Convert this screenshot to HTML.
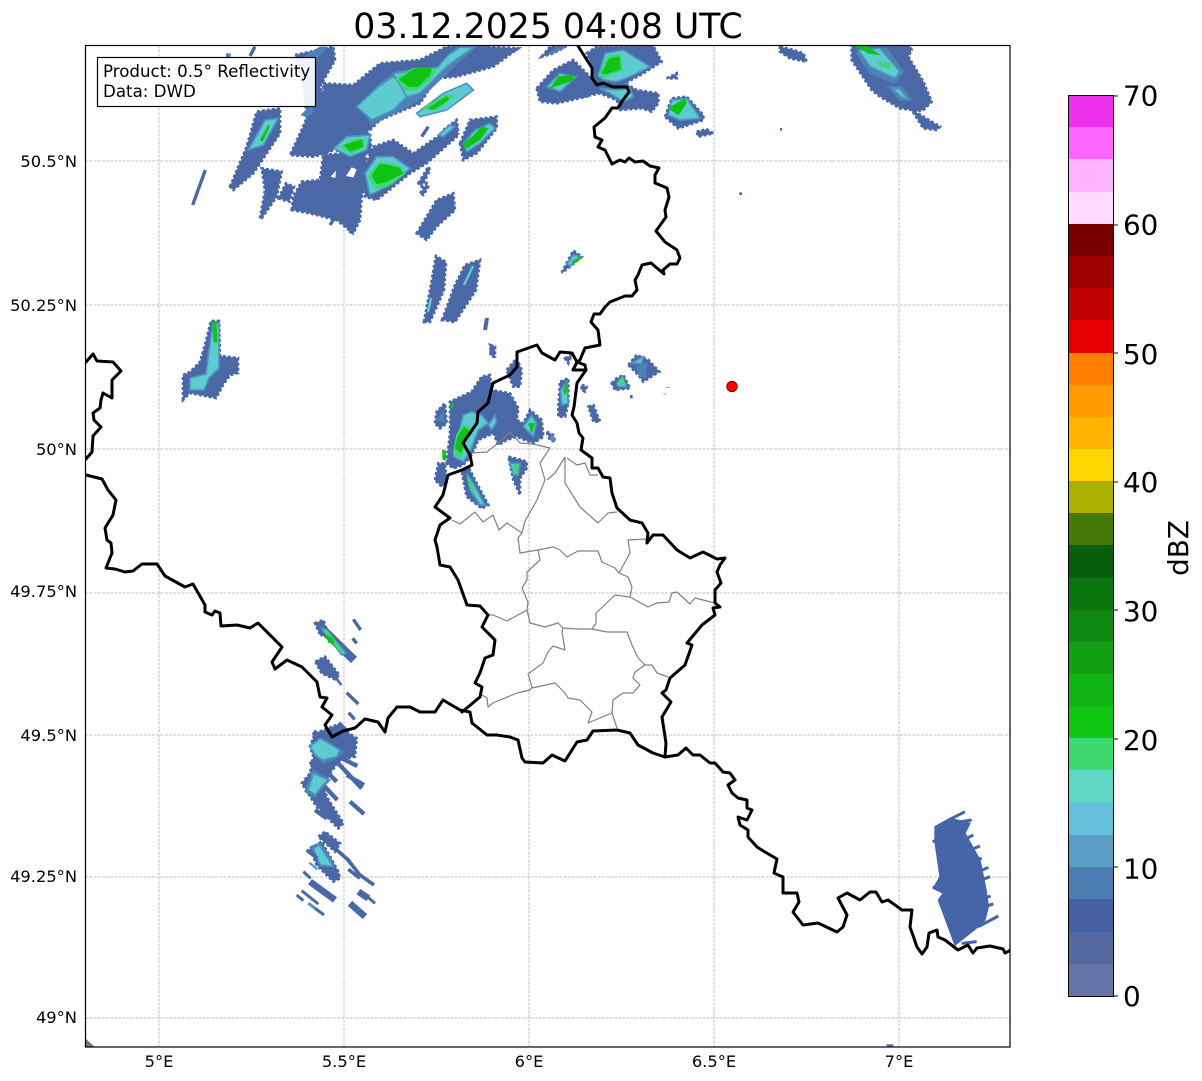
<!DOCTYPE html>
<html><head><meta charset="utf-8">
<style>
html,body{margin:0;padding:0;background:#fff;width:1202px;height:1081px;overflow:hidden}
svg{display:block}
text{font-family:"DejaVu Sans","Liberation Sans",sans-serif;fill:#000}
.g{stroke:#c2c2c2;stroke-width:.8;stroke-dasharray:3 1.2;fill:none;shape-rendering:crispEdges}
.bd{fill:none;stroke:#000;stroke-width:3;stroke-linejoin:round;stroke-linecap:round}
.ad{fill:none;stroke:#808080;stroke-width:1.2;stroke-linejoin:round}
.b{fill:#4b68a6;stroke:#4b68a6;stroke-width:8;stroke-dasharray:9 6}
.b1{fill:#4b68a6;stroke:#4b68a6;stroke-width:2.7;stroke-dasharray:3 2}
.m{fill:#4e82b6;stroke:#4e82b6;stroke-width:4}
.t{fill:#5ecbd0;stroke:#4f93c0;stroke-width:5}
.t1{fill:#5ecbd0;stroke:#4f93c0;stroke-width:1.6}
.l{fill:#3ed87a;stroke:#3ed87a;stroke-width:3}
.n{fill:#10c214;stroke:#10c214;stroke-width:1}
.s{stroke:#4b68a6;fill:none;stroke-linecap:butt}
.sm{stroke:#5ecbd0;fill:none}
.yl{font-size:16.3px;text-anchor:end}
.xl{font-size:16.3px;text-anchor:middle}
.cl{font-size:27.8px}
</style></head><body>
<svg width="1202" height="1081" viewBox="0 0 1202 1081" xmlns="http://www.w3.org/2000/svg">
<rect width="1202" height="1081" fill="#fff"/>
<text x="548" y="38" font-size="34.7" text-anchor="middle">03.12.2025 04:08 UTC</text>

<defs><clipPath id="ax"><rect x="85.5" y="45.5" width="924.5" height="1001"/></clipPath></defs>
<g clip-path="url(#ax)">
<!-- grid -->
<path class="g" d="M159 45V1047M344 45V1047M529 45V1047M714 45V1047M899 45V1047M85 161H1010M85 305H1010M85 449H1010M85 593H1010M85 735H1010M85 877H1010M85 1018H1010"/>

<polygon points="85,1038 95,1047 85,1047" fill="#777"/>

<!-- NW cluster -->
<g transform="translate(180,40) scale(.33333)">
<polygon class="b" points="430,130 520,135 600,70 720,60 800,20 890,18 1015,25 940,80 830,110 770,115 720,190 600,240 570,270 520,300 440,340 400,350 330,345 365,270 390,210 430,200"/>
<polygon class="b" points="345,45 460,20 465,60 420,140 440,200 380,230 370,130"/>
<polygon class="b" points="335,510 340,470 365,425 420,420 430,345 550,335 570,400 545,470 540,540 520,580 470,540 390,520"/>
<polygon fill="#fff" points="452,410 468,392 466,414"/>
<polygon fill="#fff" points="498,408 515,382 530,388 520,412"/>
<polygon class="b" points="550,390 580,320 640,300 700,340 830,250 830,290 740,370 690,400 640,440 590,480 555,470"/>
<polygon class="b" points="460,325 500,260 570,280 575,340 510,355"/>
<polygon class="b" points="840,310 870,240 950,230 950,265 890,340 850,360"/>
<polygon class="b" points="150,440 200,320 230,215 300,205 300,280 220,400 160,450"/>
<polygon class="b" points="240,535 255,450 245,385 305,395 290,470 245,535"/>
<polygon class="b" points="295,475 318,430 342,440 328,485"/>
<polygon class="b" points="710,580 770,480 820,460 825,510 770,560 740,600"/>
<polygon class="b" points="790,270 830,240 835,280 800,300"/>
<polygon class="b" points="715,430 745,380 750,390 725,440"/>
<polygon class="b" points="720,460 740,430 745,440 730,465"/>
<path class="s" stroke-width="10" d="M38 495L76 390M725 290L745 260M210 48L225 20M975 45L1015 25M450 555L470 525M510 580L530 540M340 345L370 300M880 40L930 20"/>
<rect x="138" y="40" width="14" height="12" fill="#4b88b8"/>
<polygon class="m" points="545,200 600,130 650,95 780,80 830,25 885,22 810,90 710,185 620,230 575,255"/>
<polygon class="t" points="530,200 595,140 640,110 700,150 640,210 575,240"/>
<polygon class="t" points="640,100 770,85 805,45 840,22 880,22 800,80 720,160 680,170"/>
<polygon class="l" points="650,115 700,85 770,85 750,120 710,150 675,150"/>
<polygon class="n" points="657,118 705,85 755,85 750,105 715,140 685,140"/>
<polygon class="t" points="710,220 790,160 860,130 880,150 800,210 720,230"/>
<polygon class="l" points="725,205 800,165 825,165 770,210"/>
<polygon class="n" points="745,205 800,168 808,178 760,210"/>
<polygon class="t" points="555,400 590,350 640,350 690,385 640,430 570,465"/>
<polygon class="l" points="565,410 600,365 660,380 675,400 620,440 585,445"/>
<polygon class="n" points="575,405 600,372 625,375 660,385 670,400 620,425 590,432"/>
<polygon class="t" points="462,325 500,290 570,285 560,330 510,350"/>
<polygon class="l" points="480,320 530,295 555,300 550,325 510,340"/>
<polygon class="n" points="492,315 545,298 550,320 510,335"/>
<polygon class="t" points="850,310 885,270 930,250 945,265 900,310 860,335"/>
<polygon class="n" points="848,312 880,287 905,260 925,265 900,300 860,325"/>
<polygon class="t" points="205,330 255,240 295,235 250,315"/>
<polygon class="n" points="240,300 265,255 270,260 247,305"/>
<polygon class="t" points="775,285 810,255 825,260 790,290"/>
<polygon class="m" points="358,60 420,22 440,22 380,90"/>
<polygon class="m" points="365,225 390,200 400,215 380,230"/>
</g>

<!-- middle small blobs -->
<polygon class="b1" points="424,322 430,290 436,256 446,262 444,290 430,322"/>
<polygon class="b1" points="442,320 455,285 465,265 480,260 476,290 455,322"/>
<path class="sm" stroke-width="2.5" d="M428 312L431 298M464 285L473 266"/>
<path class="s" stroke-width="4" d="M487 318L485 330M492 345L491 355"/>
<g transform="translate(530,40) scale(.33333)">
<polygon class="b" points="20,145 70,90 130,60 155,85 200,130 170,170 80,190 30,185"/>
<polygon class="b" points="35,50 60,20 110,18 70,40"/>
<polygon class="b" points="170,40 200,20 370,18 395,65 340,100 285,130 320,150 385,160 385,190 365,215 335,205 270,210 260,180 210,160 160,170 190,130 190,90"/>
<polygon class="b" points="405,230 425,175 470,170 520,225 520,240 445,265"/>
<polygon class="b" points="500,275 530,268 550,280 505,290"/>
<polygon class="b" points="410,115 440,100 440,115"/>
<polygon class="b" points="95,698 130,632 155,650 120,680"/>
<rect x="628" y="457" width="8" height="8" fill="#4b68a6"/>
<polygon class="t" points="50,140 90,100 140,110 90,155"/>
<polygon class="n" points="60,145 85,110 130,105 130,120 90,135"/>
<polygon class="t" points="205,105 225,40 280,30 360,80 300,110 260,125 220,120"/>
<polygon class="l" points="205,108 235,48 272,42 278,90 225,110"/>
<polygon class="n" points="215,100 238,55 268,50 272,88 228,102"/>
<polygon class="t" points="210,145 260,150 300,145 310,170 280,185 240,160"/>
<polygon class="t" points="415,225 425,180 470,175 510,235 450,240"/>
<polygon class="n" points="415,205 465,175 470,190 445,225"/>
<polygon class="t" points="110,672 130,645 150,650 122,678"/>
<polygon class="n" points="125,665 150,650 155,655 130,672"/>
<polygon class="m" points="60,40 90,20 110,20 70,38"/>
</g>

<!-- NE cluster -->
<g transform="translate(780,40) scale(.33333)">
<polygon class="b" points="215,18 390,18 395,30 385,50 430,125 455,185 430,210 405,215 480,260 470,270 430,265 395,210 360,205 300,170 275,150 215,60"/>
<polygon class="b" points="0,20 40,30 70,40 80,65 30,55 0,35"/>
<polygon class="m" points="230,40 320,25 370,95 345,130 270,100"/>
<polygon class="t" points="235,30 300,25 360,95 345,115 270,80"/>
<polygon class="m" points="325,140 365,140 395,180 360,180"/>
<polygon class="t" points="335,142 360,148 385,178 365,172"/>
<polygon class="n" points="225,18 260,18 300,45 265,40"/>
<polygon class="l" points="295,65 330,70 330,85 300,78"/>
<rect x="0" y="264" width="6" height="8" fill="#4b68a6"/>
</g>

<!-- left blob -->
<polygon class="b1" points="183,400 183,375 190,372 200,362 205,345 211,321 219,321 220,356 238,358 238,373 230,375 223,385 216,398 190,393"/>
<polygon class="t1" points="190,390 190,378 206,374 209,350 213,323 219,323 219,368 209,378 204,390"/>
<polygon class="n" points="213,322 216,322 217,342 214,342"/>

<!-- central blob -->
<g transform="translate(420,340) scale(.33333)">
<polygon class="b" points="45,250 50,215 75,190 80,250 60,265"/>
<polygon class="b" points="80,370 90,280 90,185 155,155 185,110 210,105 215,150 270,160 295,205 290,240 310,250 330,210 365,240 370,290 340,310 290,290 260,300 235,315 220,280 175,300 155,345 130,375 100,385"/>
<polygon class="b" points="45,420 55,370 75,370 80,430 65,440"/>
<polygon class="b" points="125,395 145,380 165,420 205,495 185,505 140,470"/>
<polygon class="b" points="265,350 305,360 320,365 320,385 300,415 300,465 280,420"/>
<polygon class="b" points="260,90 290,55 305,90 300,140 280,140"/>
<polygon class="b" points="210,15 225,20 225,50 215,50"/>
<polygon class="b" points="380,275 400,285 405,305 390,300"/>
<polygon class="b" points="420,125 445,115 445,190 435,230 415,230 415,205"/>
<polygon class="b" points="435,55 455,45 445,70"/>
<polygon class="b" points="485,135 500,140 495,155 485,150"/>
<polygon class="b" points="505,200 520,195 540,245 520,245"/>
<polygon class="b" points="575,130 590,115 610,105 630,145 585,150"/>
<polygon class="b" points="625,75 650,45 685,60 718,95 670,125 655,105"/>
<rect x="630" y="165" width="8" height="10" fill="#4b68a6"/>
<path stroke="#4b68a6" stroke-width="2" d="M738 142H748M730 162H738"/>
<polygon class="m" points="50,240 70,215 72,245"/>
<polygon class="t" points="100,350 115,280 130,225 155,215 185,225 205,250 175,270 150,335 130,365"/>
<polygon class="t" points="205,255 225,225 230,245 215,270"/>
<polygon class="l" points="100,340 110,285 130,255 155,265 135,315 125,355"/>
<polygon class="n" points="105,325 113,288 132,262 148,272 135,308 122,340"/>
<polygon class="n" points="67,330 78,332 78,360 68,360"/>
<polygon class="n" points="92,190 100,190 100,205 92,205"/>
<polygon class="t" points="140,400 160,430 195,495 180,495 150,450"/>
<polygon class="l" points="143,410 155,430 165,460 150,440"/>
<polygon class="t" points="270,370 300,370 295,405 280,405"/>
<polygon class="l" points="280,375 295,375 290,400 282,400"/>
<polygon class="t" points="310,260 335,225 350,250 340,290"/>
<polygon class="n" points="325,250 345,250 335,280"/>
<polygon class="t" points="422,150 440,125 445,190 425,195"/>
<polygon class="n" points="430,150 440,125 442,150 433,165"/>
<polygon class="t" points="590,130 605,110 620,140 595,140"/>
<polygon class="l" points="600,125 608,112 615,132 603,135"/>
<polygon class="t" points="635,70 670,50 665,70"/>
<polygon class="m" points="650,80 680,70 675,110 660,110"/>
<polygon class="t" points="395,288 403,300 393,298"/>
</g>

<!-- SW group -->
<g transform="translate(280,610) scale(.33333)">
<polygon class="b" points="105,40 130,30 140,60 122,78"/>
<path class="s" stroke-width="26" d="M130 60L222 150"/>
<polygon class="t" points="125,55 140,60 198,130 185,135"/>
<polygon class="l" points="128,58 140,62 190,125 180,125"/>
<polygon class="n" points="138,75 158,85 162,100 145,98"/>
<path class="s" stroke-width="10" d="M220 28L242 60M218 85L230 100M200 248L235 282M206 308L224 328"/>
<polygon class="b" points="106,155 135,140 178,195 165,208 125,190"/>
<path class="s" stroke-width="8" d="M165 200L184 225"/>
<polygon class="b" points="105,370 170,345 230,385 225,440 180,450 150,490 130,520 140,560 190,640 175,655 110,590 65,520 90,490 100,440 90,410"/>
<path class="s" stroke-width="16" d="M100 365L125 385M175 340L200 365"/>
<path class="s" stroke-width="13" d="M175 440L232 468M170 455L245 535M200 495L252 525M210 575L252 612M105 600L140 625M90 455L130 485M135 480L170 515M130 525L172 570"/>
<polygon class="m" points="95,415 125,385 190,425 170,445 130,460"/>
<polygon class="t" points="90,410 120,385 180,420 170,440 130,450 110,440"/>
<polygon class="m" points="75,545 100,480 150,510 125,535 105,560"/>
<polygon class="t" points="85,540 100,490 145,510 125,530 105,555"/>
<polygon class="b" points="115,680 135,665 180,700 165,725"/>
<polygon class="b" points="90,715 125,695 175,785 180,805 160,815 110,765"/>
<polygon class="m" points="92,710 120,700 158,755 125,765"/>
<polygon class="t" points="100,715 118,705 160,770 120,765"/>
<path class="s" stroke-width="11" d="M165 715L210 755M200 745L240 795M205 778L240 805M240 795L282 825M80 720L112 745"/>
<path class="s" stroke-width="20" d="M90 815L165 870M235 845L265 865M210 880L255 920"/>
<path class="s" stroke-width="9" d="M70 785L92 805M50 855L70 872M65 842L115 882M85 880L132 915M262 860L285 880"/>
<path d="M85 880L105 896M88 758L112 778" stroke="#4ba0c8" stroke-width="7"/>
</g>

<!-- SE block -->
<g transform="translate(650,730) scale(.33333)">
<polygon fill="#4664a8" stroke="#4664a8" stroke-width="4" points="855,290 900,265 960,280 945,310 990,390 1000,440 1010,490 1015,530 1005,570 985,590 915,645 865,510 880,490 850,475 870,440 855,335"/>
<path class="s" style="stroke:#4664a8" stroke-width="9" d="M900 268L945 245M848 335L880 322M848 473L880 462M960 360L990 348M965 395L995 385M985 425L1015 412M995 450L1020 440M990 510L1022 498M985 535L1030 522M985 590L1045 558M935 640L980 635M870 285L965 270M940 330L970 315"/>
<rect x="710" y="943" width="20" height="6" fill="#4664a8"/>
</g>

<!-- admin boundaries -->
<g class="ad">
<path d="M452 520L460 524L475 512L483 522L493 515L499 530L507 523L522 533L525 521L537 500L545 480L540 463L550 448L533 444L520 443L510 432L498 443L487 452L472 453"/>
<path d="M522 533L518 538L520 553L538 550L553 547L560 550L567 557L578 551L598 551L602 562L615 568L619 573L628 577L632 587L630 597"/>
<path d="M538 550L540 560L527 572L527 580L522 588L528 602L527 610L530 623L545 627L558 623L563 628L577 629L592 629L607 632L627 632L632 645L638 658L645 665L635 672L633 678L640 685L633 693L623 693L613 700L612 713L617 728"/>
<path d="M527 610L507 621L493 615L488 615"/>
<path d="M563 628L562 632L565 650L553 646L548 652L543 663L528 674L532 687L530 690L517 693L493 703L488 707L487 698L482 695"/>
<path d="M532 688L555 683L565 693L568 698L580 700L592 712L588 723L612 713"/>
<path d="M645 665L652 665L657 673L668 677"/>
<path d="M592 629L596 623L596 613L615 595L630 597L648 607L657 603L669 602L672 593L677 592L690 604L695 598L715 603"/>
<path d="M619 573L630 553L628 540L645 539L647 542"/>
<path d="M565 457L555 473L547 480M565 457L565 483L580 507L598 523L608 513L617 512M567 458L577 465L585 463L590 475L598 475"/>
</g>

<!-- country borders -->
<g class="bd">
<path d="M578 46L585 57L592 68L592 78L597 85L603 83L613 87L627 87L629 92L623 100L618 108L612 108L605 118L594 127L595 137L602 140L598 147L605 150L612 164L620 160L625 162L629 158L635 162L643 161L650 166L659 168L655 175L655 183L667 188L669 197L665 210L666 217L656 231L665 242L677 250L680 258L677 264L670 264L663 270L664 274L651 263L642 265L638 275L635 280L637 290L632 296L625 296L610 302L605 307L600 314L594 314L591 322L598 330L600 345L585 348L582 355L580 360L577 362L573 370L586 370L585 365L577 362"/>
<path d="M586 370L577 383L574 407L572 415L577 423L579 433L583 438L581 450L592 458L592 468L598 468L603 477L610 478L612 493L617 508L630 520L642 523L648 533L647 543L653 535L663 535L677 550L690 558L703 552L717 559L725 558L720 565L717 572L721 583L715 590L715 603L720 607L713 608L715 615L702 625L687 643L692 645L685 665L670 678L666 690L662 693L671 702L662 717L666 743L665 757"/>
<path d="M573 370L577 362L572 353L560 352L555 360L542 353L537 345L517 352L517 367L510 375L493 383L488 403L478 412L477 423L463 443L470 455L472 465L462 470L448 475L443 495L435 507L450 518L440 525L435 540L437 547L440 565L450 567L458 580L467 605L480 606L488 615L482 627L495 640L493 655L485 658L480 673L475 683L482 687L480 697L462 712"/>
<path d="M397 707L410 707L420 712L430 712L435 712L443 700L460 710L470 712L472 723L487 735L497 735L510 737L518 740L522 758L525 762L543 763L552 755L565 761L577 742L587 740L593 731L617 730L630 733L638 745L653 753L665 757L678 755L686 748L693 755L700 755L710 763L715 763L723 772L730 773L735 780L728 785L732 793L738 798L747 800L747 808L752 810L747 820L738 817L740 825L748 830L748 837L757 847L765 852L777 859L774 873L783 877L783 893L797 893L799 902L793 912L803 925L818 923L837 932L843 927L847 915L838 898L847 893L860 900L870 892L876 892L882 902L888 900L902 910L912 910L910 927L917 947L922 954L927 947L929 933L937 930L938 937L945 940L958 950L968 945L973 953L977 948L990 946L1003 949L1005 953L1011 950"/>
<path d="M86 362L93 354L97 361L113 362L121 371L112 380L112 398L103 393L101 400L100 408L93 413L94 420L101 427L93 436L92 452L86 459"/>
<path d="M86 475L102 479L108 490L116 500L113 515L105 528L107 540L111 543L112 553L106 568L115 569L125 572L133 571L142 564L157 564L165 576L185 587L193 584L205 605L205 612L212 615L215 611L220 613L221 626L237 625L250 628L258 623L282 647L272 662L275 669L287 660L302 667L317 682L320 697L327 698L322 707L332 715L325 725L332 737L343 731L355 728L365 719L378 722L385 732L388 718L397 707"/>
</g>

<circle cx="732" cy="386.5" r="5.3" fill="#f00" stroke="#400" stroke-width=".7"/>
</g>

<!-- axes frame -->
<rect x="85.5" y="45.5" width="924.5" height="1001.5" fill="none" stroke="#000" stroke-width="1.2"/>

<!-- legend -->
<rect x="97.5" y="57.5" width="218" height="49" fill="#fff" fill-opacity=".9" stroke="#000" stroke-width="1.2"/>
<text x="103" y="77" font-size="16.67">Product: 0.5° Reflectivity</text>
<text x="103" y="97" font-size="16.67">Data: DWD</text>

<!-- tick labels -->
<text class="yl" x="77" y="167">50.5°N</text>
<text class="yl" x="77" y="311">50.25°N</text>
<text class="yl" x="77" y="455">50°N</text>
<text class="yl" x="77" y="597">49.75°N</text>
<text class="yl" x="77" y="741">49.5°N</text>
<text class="yl" x="77" y="882">49.25°N</text>
<text class="yl" x="77" y="1023">49°N</text>
<text class="xl" x="159" y="1067">5°E</text>
<text class="xl" x="344" y="1067">5.5°E</text>
<text class="xl" x="529" y="1067">6°E</text>
<text class="xl" x="714" y="1067">6.5°E</text>
<text class="xl" x="899" y="1067">7°E</text>

<!-- colorbar -->
<g shape-rendering="crispEdges">
<rect x="1068" y="964" width="45" height="32.5" fill="#6474a6"/>
<rect x="1068" y="932" width="45" height="32" fill="#53699f"/>
<rect x="1068" y="899" width="45" height="33" fill="#4460a2"/>
<rect x="1068" y="867" width="45" height="32" fill="#4d7cb3"/>
<rect x="1068" y="835" width="45" height="32" fill="#5a9dc5"/>
<rect x="1068" y="803" width="45" height="32" fill="#64bfdb"/>
<rect x="1068" y="770" width="45" height="33" fill="#60d7c4"/>
<rect x="1068" y="738" width="45" height="32" fill="#3dd86e"/>
<rect x="1068" y="706" width="45" height="32" fill="#10c814"/>
<rect x="1068" y="674" width="45" height="32" fill="#10b414"/>
<rect x="1068" y="642" width="45" height="32" fill="#10a012"/>
<rect x="1068" y="610" width="45" height="32" fill="#0e8a10"/>
<rect x="1068" y="578" width="45" height="32" fill="#0b750e"/>
<rect x="1068" y="545" width="45" height="33" fill="#075f0b"/>
<rect x="1068" y="513" width="45" height="32" fill="#477a08"/>
<rect x="1068" y="481" width="45" height="32" fill="#adb003"/>
<rect x="1068" y="449" width="45" height="32" fill="#ffd700"/>
<rect x="1068" y="417" width="45" height="32" fill="#ffb400"/>
<rect x="1068" y="385" width="45" height="32" fill="#ff9b00"/>
<rect x="1068" y="353" width="45" height="32" fill="#ff7d00"/>
<rect x="1068" y="320" width="45" height="33" fill="#e60000"/>
<rect x="1068" y="288" width="45" height="32" fill="#bd0000"/>
<rect x="1068" y="256" width="45" height="32" fill="#9c0000"/>
<rect x="1068" y="224" width="45" height="32" fill="#780000"/>
<rect x="1068" y="192" width="45" height="32" fill="#ffdcff"/>
<rect x="1068" y="159" width="45" height="33" fill="#ffb4ff"/>
<rect x="1068" y="127" width="45" height="32" fill="#ff66ff"/>
<rect x="1068" y="95" width="45" height="32" fill="#ee30ee"/>
</g>
<rect x="1068.5" y="95.5" width="45" height="901" fill="none" stroke="#000" stroke-width="1"/>
<path stroke="#000" stroke-width="1" d="M1113 96H1118M1113 225H1118M1113 353H1118M1113 482H1118M1113 610H1118M1113 739H1118M1113 867H1118M1113 996H1118"/>
<text class="cl" x="1123" y="105.5">70</text>
<text class="cl" x="1123" y="234.5">60</text>
<text class="cl" x="1123" y="364">50</text>
<text class="cl" x="1123" y="492">40</text>
<text class="cl" x="1123" y="621">30</text>
<text class="cl" x="1123" y="750">20</text>
<text class="cl" x="1123" y="878.5">10</text>
<text class="cl" x="1123" y="1006">0</text>
<text class="cl" transform="translate(1188,548) rotate(-90)" text-anchor="middle">dBZ</text>
</svg>
</body></html>
